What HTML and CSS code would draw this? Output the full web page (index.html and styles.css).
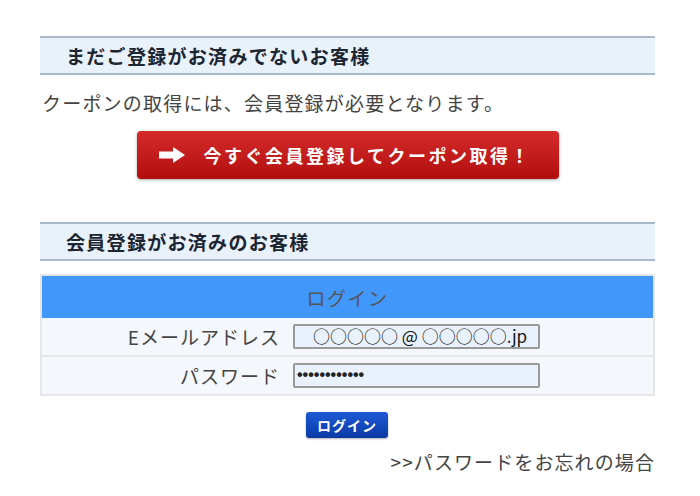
FILE: index.html
```html
<!DOCTYPE html>
<html lang="ja">
<head>
  <meta charset="UTF-8">
  <title>会員登録・ログイン</title>
  <link rel="stylesheet" href="styles.css">
</head>
<body>
  <div class="container">
    <h2 class="section-title">まだご登録がお済みでないお客様</h2>
    <p class="lead">クーポンの取得には、会員登録が必要となります。</p>
    <div class="cta-wrap">
      <a class="btn-cta" href="#">
        <svg class="cta-arrow" width="28" height="18" viewBox="0 0 28 18">
          <path d="M1 5.5h14V1l12 8-12 8v-4.5H1z" fill="#fff"/>
        </svg>
        <span>今すぐ会員登録してクーポン取得！</span>
      </a>
    </div>

    <h2 class="section-title">会員登録がお済みのお客様</h2>
    <table class="login-table">
      <tr>
        <th colspan="2" class="login-head">ログイン</th>
      </tr>
      <tr>
        <td class="label">Eメールアドレス</td>
        <td class="field"><div class="input">○○○○○ @ ○○○○○.jp</div></td>
      </tr>
      <tr>
        <td class="label">パスワード</td>
        <td class="field"><div class="input input-pass">••••••••••••</div></td>
      </tr>
    </table>

    <div class="login-wrap">
      <button class="btn-login">ログイン</button>
    </div>
    <div class="forgot"><a href="#">&gt;&gt;パスワードをお忘れの場合</a></div>
  </div>
</body>
</html>
```

FILE: styles.css
```css
body {
  font-family: 'Noto Sans CJK JP', 'Noto Sans', sans-serif;
  margin: 0;
  padding: 0;
  background-color: #fff;
  color: #444;
}
.container {
  width: 615px;
  margin: 0 0 0 40px;
  padding-top: 36px;
}
.section-title {
  margin: 0;
  height: 35px;
  line-height: 35px;
  padding-left: 26px;
  font-size: 19px;
  font-weight: bold;
  color: #1c2633;
  background-color: #e9f1fa;
  border-top: 2px solid #a9b9cc;
  border-bottom: 2px solid #a9b9cc;
  letter-spacing: 1.3px;
}
.lead {
  margin: 14px 0 0 2px;
  font-size: 19px;
  line-height: 28px;
  letter-spacing: 1.2px;
  color: #444;
}
.cta-wrap {
  display: flex;
  justify-content: center;
  padding: 14px 0 43px;
}
.btn-cta {
  display: flex;
  align-items: center;
  width: 422px;
  height: 48px;
  box-sizing: border-box;
  padding-left: 21px;
  border-radius: 4px;
  background: linear-gradient(#d52b2b, #b20e0e);
  box-shadow: 0 1px 3px rgba(0,0,0,0.35);
  color: #fff;
  text-decoration: none;
  font-size: 18px;
  font-weight: bold;
  letter-spacing: 2.5px;
}
.cta-arrow {
  margin-right: 18px;
}
.login-table {
  width: 100%;
  margin-top: 13px;
  border-collapse: collapse;
  border: 2px solid #e4e6e8;
}
.login-head {
  background-color: #4297fa;
  color: #555;
  font-size: 19px;
  font-weight: normal;
  letter-spacing: 1.5px;
  height: 42px;
  padding: 0;
}
.login-table td {
  background-color: #f4f8fd;
  height: 37px;
  padding: 0;
  border-bottom: 2px solid #e4e6e8;
}
.label {
  width: 238px;
  text-align: right;
  padding-right: 4px !important;
  font-size: 19px;
  letter-spacing: 1px;
  color: #444;
}
.field {
  padding-left: 9px !important;
}
.input {
  width: 247px;
  height: 25px;
  box-sizing: border-box;
  background-color: #e9f1fc;
  border: 2px solid #999;
  border-radius: 2px;
  font-size: 17px;
  line-height: 20px;
  padding-left: 18px;
  color: #111;
}
.input-pass {
  padding-left: 2px;
  font-family: 'Liberation Sans', sans-serif;
  font-size: 16px;
  font-weight: bold;
  color: #222;
}
.login-wrap {
  display: flex;
  justify-content: center;
  padding-top: 16px;
  margin-left: -1px;
}
.btn-login {
  width: 82px;
  height: 26px;
  border: none;
  border-radius: 3px;
  background: linear-gradient(#1d5ad6, #0a3aa6);
  box-shadow: 0 1px 2px rgba(0,0,0,0.3);
  color: #fff;
  font-family: inherit;
  font-size: 14px;
  font-weight: bold;
  letter-spacing: 1px;
}
.forgot {
  text-align: right;
  margin-top: 10px;
}
.forgot a {
  color: #444;
  text-decoration: none;
  font-size: 19px;
  letter-spacing: 1.1px;
}
```
